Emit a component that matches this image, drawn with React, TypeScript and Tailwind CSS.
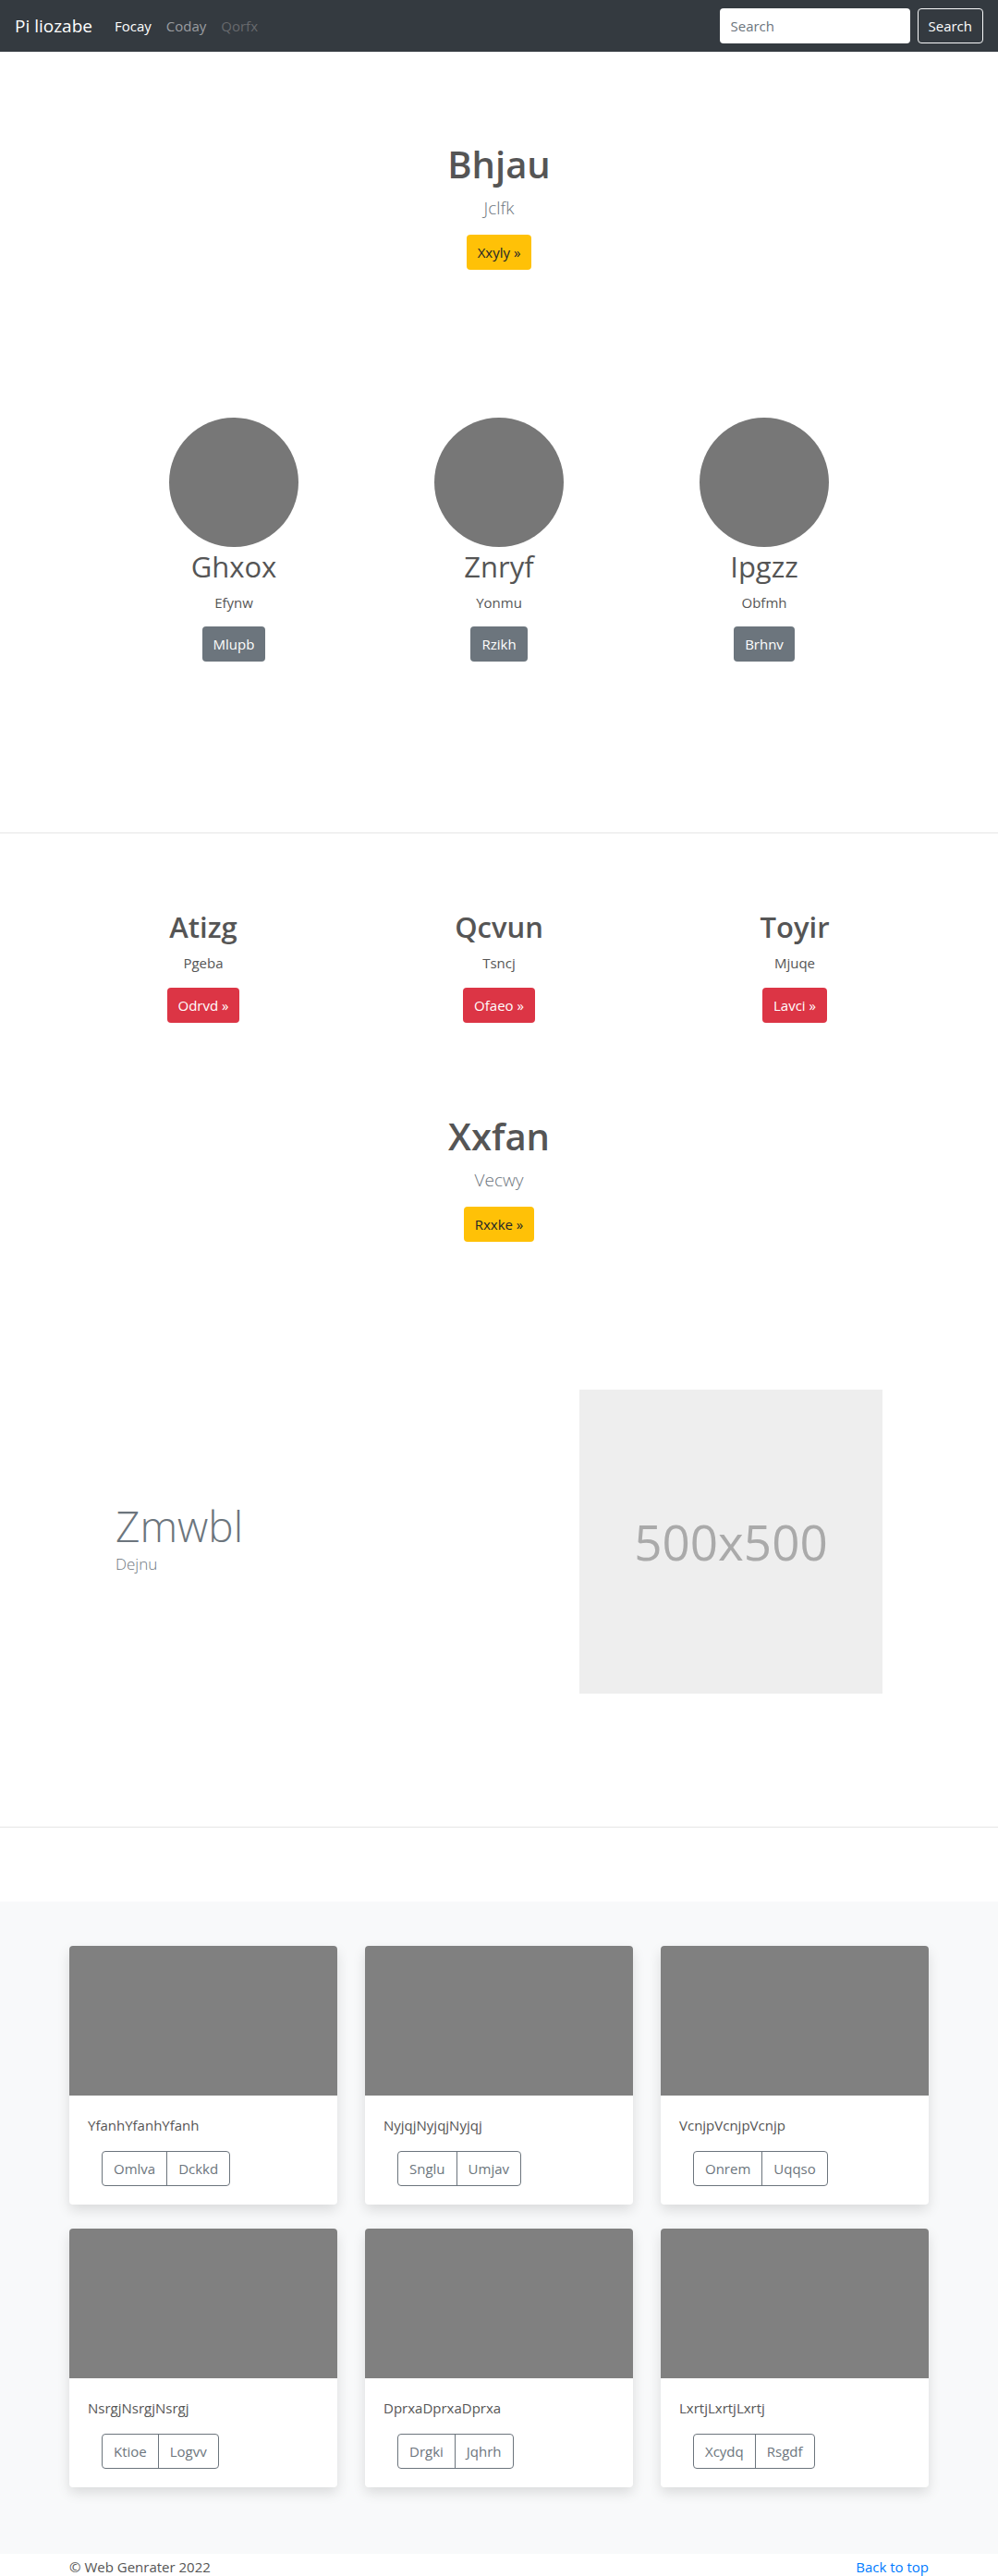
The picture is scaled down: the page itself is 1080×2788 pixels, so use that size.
const font = "font-['Open_Sans','Noto_Sans',sans-serif]";

const people = [
  { name: "Ghxox", sub: "Efynw", btn: "Mlupb" },
  { name: "Znryf", sub: "Yonmu", btn: "Rzikh" },
  { name: "Ipgzz", sub: "Obfmh", btn: "Brhnv" },
];

const features = [
  { title: "Atizg", sub: "Pgeba", btn: "Odrvd »" },
  { title: "Qcvun", sub: "Tsncj", btn: "Ofaeo »" },
  { title: "Toyir", sub: "Mjuqe", btn: "Lavci »" },
];

const cards = [
  { text: "YfanhYfanhYfanh", a: "Omlva", b: "Dckkd" },
  { text: "NyjqjNyjqjNyjqj", a: "Snglu", b: "Umjav" },
  { text: "VcnjpVcnjpVcnjp", a: "Onrem", b: "Uqqso" },
  { text: "NsrgjNsrgjNsrgj", a: "Ktioe", b: "Logvv" },
  { text: "DprxaDprxaDprxa", a: "Drgki", b: "Jqhrh" },
  { text: "LxrtjLxrtjLxrtj", a: "Xcydq", b: "Rsgdf" },
];

const Navbar = () => (
  <nav className="h-14 bg-[#343a40] flex items-center px-4">
    <span className="text-[19px] text-white mr-6">Pi liozabe</span>
    <div className="flex gap-4 text-[15px]">
      <span className="text-white">Focay</span>
      <span className="text-[#9a9da0]">Coday</span>
      <span className="text-[#67696d]">Qorfx</span>
    </div>
    <div className="ml-auto flex gap-2">
      <input
        placeholder="Search"
        className="w-[206px] h-[38px] rounded bg-white px-3 text-[15px] text-[#495057] placeholder:text-[#6c757d] outline-none"
      />
      <button className="h-[38px] px-[11px] rounded border border-[#f8f9fa] text-[15px] text-white">
        Search
      </button>
    </div>
  </nav>
);

const App = () => {
  return (
    <div className={`${font} bg-white text-[#555] min-h-[2788px]`}>
      <Navbar />

      <section className="pt-[98px] flex flex-col items-center">
        <h1 className="text-[40px] leading-[48px] font-semibold mb-2">Bhjau</h1>
        <p className="text-[19px] leading-[30px] font-light text-[#6c757d] mb-[14px]">Jclfk</p>
        <button className="h-[38px] px-3 rounded bg-[#ffc107] text-[15px] text-[#212529]">
          Xxyly »
        </button>
      </section>

      <section className="pt-[160px] pb-[185px]">
        <div className="w-[861px] mx-auto grid grid-cols-3">
          {people.map((p) => (
            <div key={p.name} className="flex flex-col items-center">
              <div className="w-[140px] h-[140px] rounded-full bg-[#777]" />
              <h2 className="text-[31px] leading-[38px] mt-[2px] mb-2">{p.name}</h2>
              <p className="text-[15px] leading-6 mb-[14px]">{p.sub}</p>
              <button className="h-[38px] px-3 rounded bg-[#6c757d] text-[15px] text-white">
                {p.btn}
              </button>
            </div>
          ))}
        </div>
      </section>

      <hr className="border-t border-[#e6e6e6]" />

      <section className="pt-[82px]">
        <div className="w-[960px] mx-auto grid grid-cols-3">
          {features.map((f) => (
            <div key={f.title} className="flex flex-col items-center">
              <h2 className="text-[31px] leading-[38px] font-semibold mb-2">{f.title}</h2>
              <p className="text-[15px] leading-6 mb-[15px]">{f.sub}</p>
              <button className="h-[38px] px-3 rounded bg-[#dc3545] text-[15px] text-white">
                {f.btn}
              </button>
            </div>
          ))}
        </div>
      </section>

      <section className="pt-[99px] flex flex-col items-center">
        <h1 className="text-[40px] leading-[48px] font-semibold mb-2">Xxfan</h1>
        <p className="text-[19px] leading-[30px] font-light text-[#6c757d] mb-[14px]">Vecwy</p>
        <button className="h-[38px] px-3 rounded bg-[#ffc107] text-[15px] text-[#212529]">
          Rxxke »
        </button>
      </section>

      <section className="pt-[160px] pb-[144px]">
        <div className="w-[960px] mx-auto flex">
          <div className="w-[567px] pl-[65px] flex flex-col justify-center pb-2">
            <h2 className="text-[46px] leading-[56px] font-light text-[#6c757d]">Zmwbl</h2>
            <p className="text-[17px] leading-[27px] font-light text-[#6c757d]">Dejnu</p>
          </div>
          <div className="w-[328px] h-[329px] bg-[#eee] flex items-center justify-center">
            <span className="text-[53px] text-[#aaa]">500x500</span>
          </div>
        </div>
      </section>

      <hr className="border-t border-[#e6e6e6]" />

      <section className="mt-[80px] bg-[#f8f9fa] pt-12 pb-[72px]">
        <div className="w-[930px] mx-auto grid grid-cols-3 gap-x-[30px] gap-y-[26px]">
          {cards.map((c) => (
            <div
              key={c.text}
              className="bg-white rounded shadow-[0_6px_14px_rgba(0,0,0,0.12)] overflow-hidden"
            >
              <div className="h-[162px] bg-[#808080]" />
              <div className="p-5">
                <p className="text-[15px] leading-6 mb-4">{c.text}</p>
                <div className="pl-[15px]">
                  <div className="inline-flex rounded border border-[#6c757d] text-[15px] text-[#6c757d]">
                    <span className="h-[36px] px-3 flex items-center border-r border-[#6c757d]">
                      {c.a}
                    </span>
                    <span className="h-[36px] px-3 flex items-center">{c.b}</span>
                  </div>
                </div>
              </div>
            </div>
          ))}
        </div>
      </section>

      <footer className="pt-[2px] pb-12">
        <div className="w-[930px] mx-auto flex justify-between text-[15px] leading-6">
          <span>© Web Genrater 2022</span>
          <span className="text-[#007bff]">Back to top</span>
        </div>
      </footer>
    </div>
  );
};

export default App;
